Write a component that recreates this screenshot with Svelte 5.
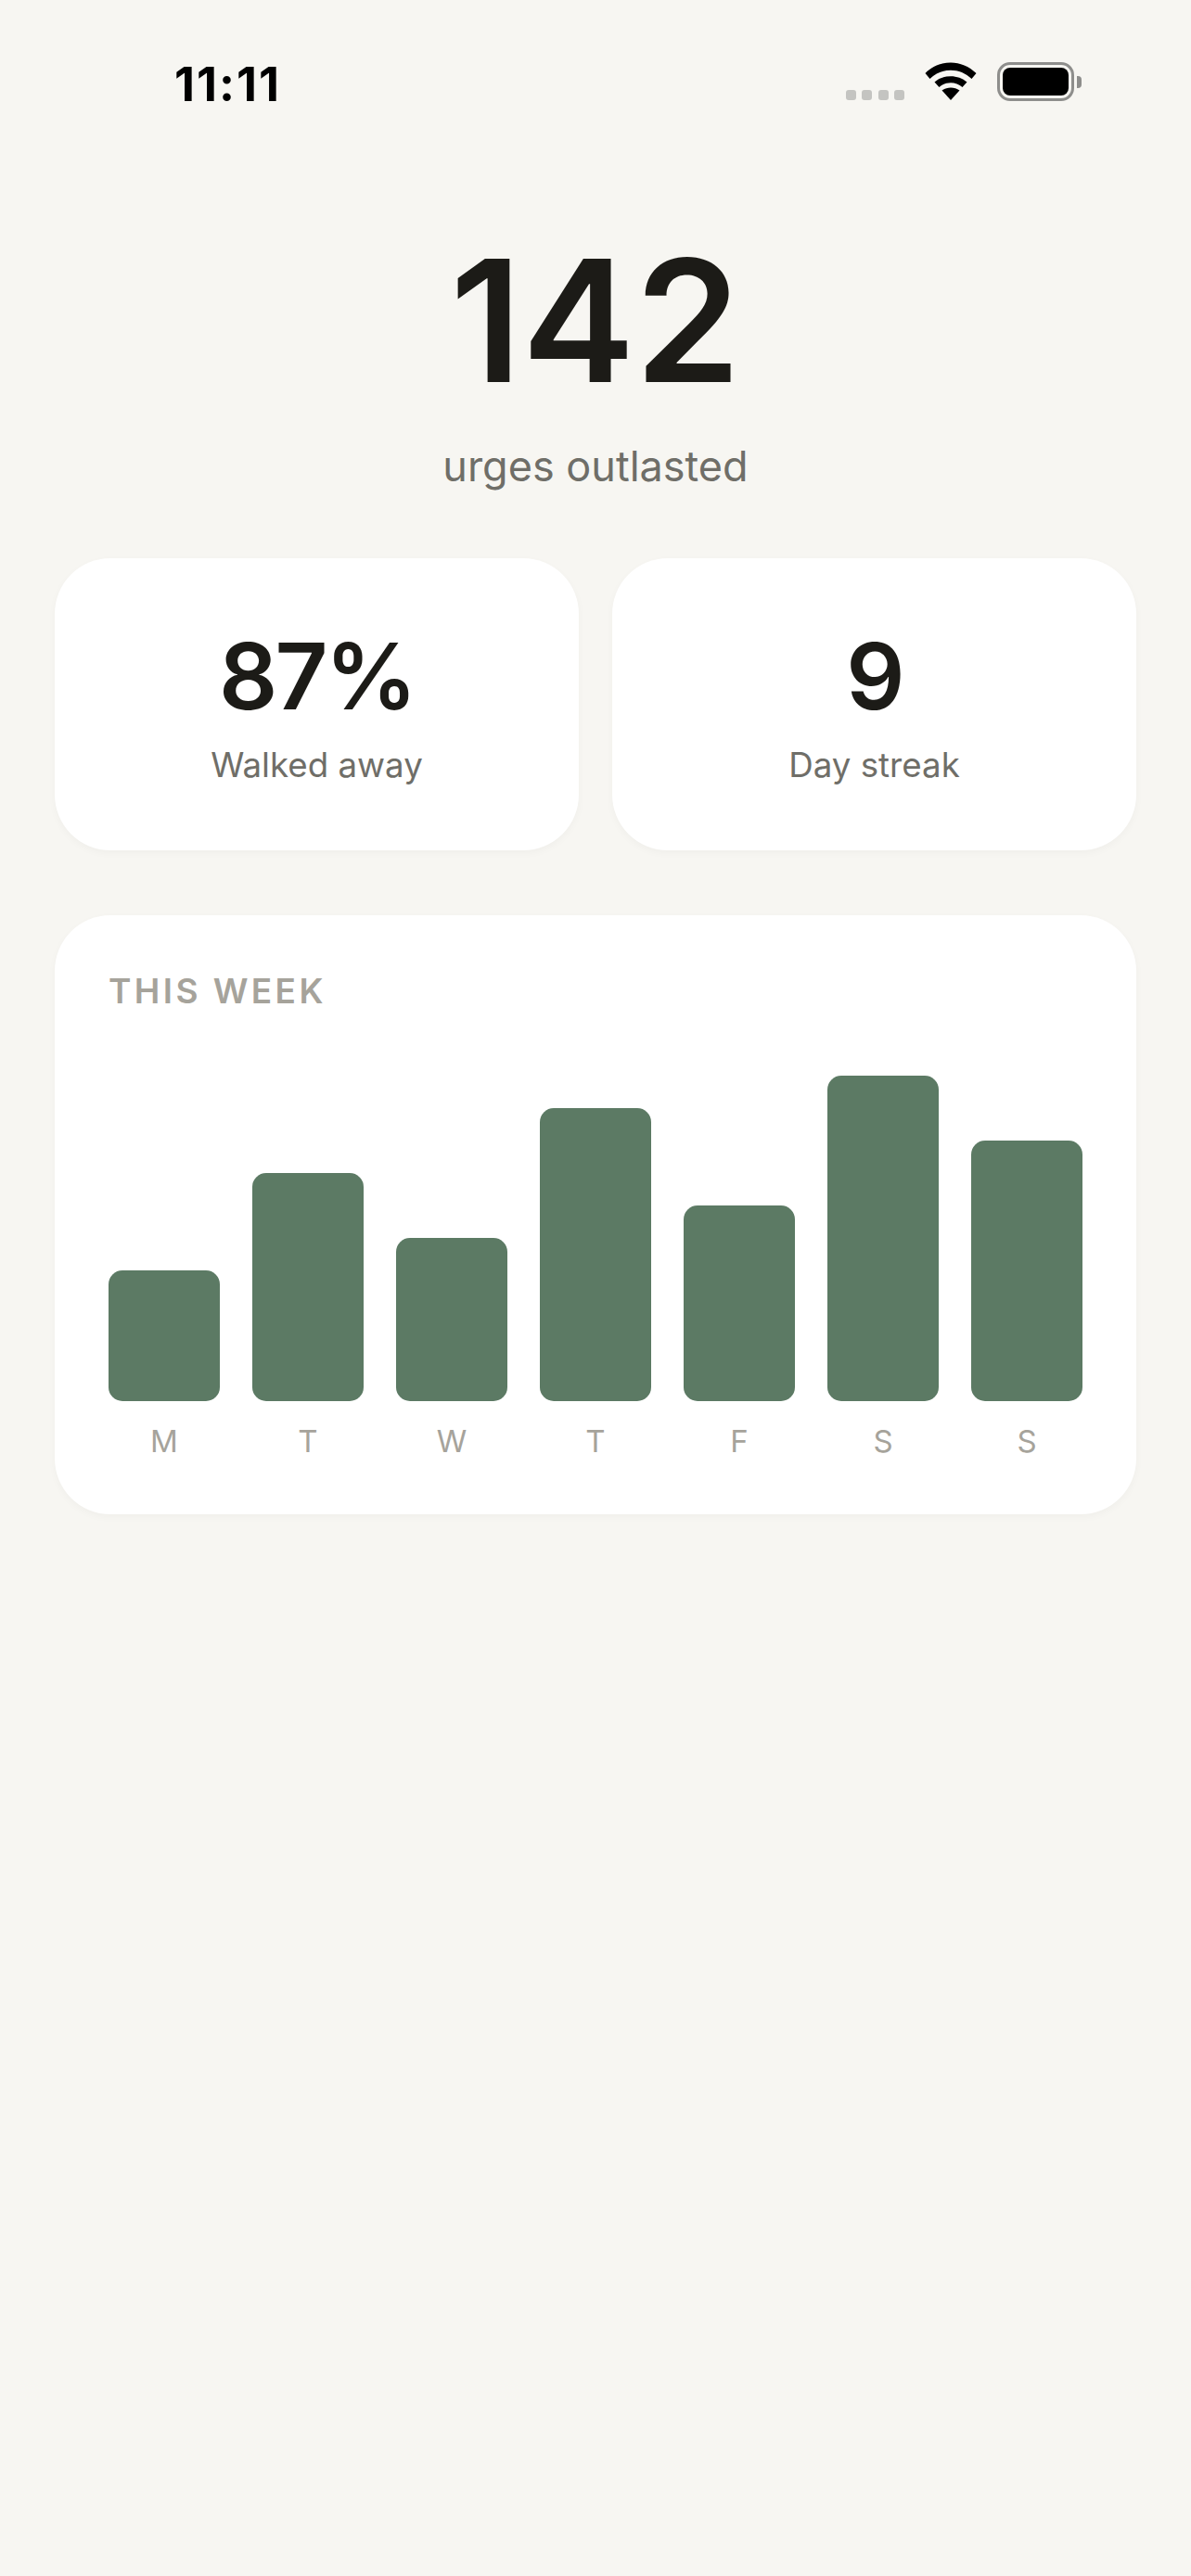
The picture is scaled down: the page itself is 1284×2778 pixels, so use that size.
<script>
  const days = [
    { label: 'M', h: 141 },
    { label: 'T', h: 246 },
    { label: 'W', h: 176 },
    { label: 'T', h: 316 },
    { label: 'F', h: 211 },
    { label: 'S', h: 351 },
    { label: 'S', h: 281 }
  ];
</script>

<div class="screen">
  <header class="status">
    <span class="time">11:11</span>
    <div class="indicators">
      <div class="dots"><i></i><i></i><i></i><i></i></div>
      <svg class="wifi" width="56" height="41" viewBox="0 0 56 41">
        <path d="M28 41 L18.500 30.500 C24 26.500 32 26.500 37.500 30.500 Z" fill="#000"/>
        <path d="M10.500 21.500 C20 13 36 13 45.500 21.500 L40.500 27 C33.500 20.500 22.500 20.500 15.500 27 Z" fill="#000"/>
        <path d="M0.500 12 C16 -3.500 40 -3.500 55.500 12 L50.500 18 C38 5.500 18 5.500 5.500 18 Z" fill="#000"/>
      </svg>
      <div class="battery"><div class="level"></div><div class="cap"></div></div>
    </div>
  </header>

  <section class="hero">
    <div class="count">142</div>
    <div class="caption">urges outlasted</div>
  </section>

  <section class="stats">
    <div class="card stat">
      <div class="value">87%</div>
      <div class="label">Walked away</div>
    </div>
    <div class="card stat">
      <div class="value">9</div>
      <div class="label">Day streak</div>
    </div>
  </section>

  <section class="card week">
    <div class="title">THIS WEEK</div>
    <div class="chart">
      {#each days as d}
        <div class="col">
          <div class="track"><div class="bar" style="height:{d.h}px"></div></div>
          <div class="day">{d.label}</div>
        </div>
      {/each}
    </div>
  </section>
</div>

<style>
  :global(body) {
    margin: 0;
    background: #f7f6f2;
  }
  .screen {
    width: 1284px;
    height: 2778px;
    box-sizing: border-box;
    background: #f7f6f2;
    font-family: Inter, "Liberation Sans", sans-serif;
    padding: 0 59px;
    display: flex;
    flex-direction: column;
    overflow: hidden;
  }
  .status {
    height: 176px;
    margin: 0 -59px;
    display: flex;
    justify-content: space-between;
    align-items: flex-start;
    padding: 61px 126px 0 188px;
    box-sizing: border-box;
  }
  .time {
    font-size: 51px;
    font-weight: 650;
    line-height: 60px;
    color: #000;
    letter-spacing: 2px;
  }
  .indicators {
    display: flex;
    align-items: flex-start;
    gap: 22px;
    padding-top: 6px;
  }
  .dots {
    display: flex;
    gap: 6.5px;
    margin-top: 30px;
  }
  .dots i {
    width: 11px;
    height: 11px;
    border-radius: 3px;
    background: #c4c4c1;
    display: block;
  }
  .wifi {
    display: block;
  }
  .battery {
    position: relative;
    width: 83px;
    height: 42px;
    box-sizing: border-box;
    border: 3.5px solid #8e8e8c;
    border-radius: 14px;
    padding: 3px;
  }
  .level {
    width: 100%;
    height: 100%;
    background: #000;
    border-radius: 8px;
  }
  .cap {
    position: absolute;
    right: -10.500px;
    top: 11.500px;
    width: 5px;
    height: 13px;
    background: #8e8e8c;
    border-radius: 0 4px 4px 0;
  }
  .hero {
    text-align: center;
    display: flex;
    flex-direction: column;
    align-items: center;
  }
  .count {
    font-size: 183px;
    font-weight: 600;
    line-height: 183px;
    letter-spacing: 0;
    color: #1c1b17;
    margin-top: 78px;
  }
  .caption {
    font-size: 45px;
    line-height: 54px;
    color: #6f6e68;
    margin-top: 39px;
  }
  .stats {
    display: grid;
    grid-template-columns: 1fr 1fr;
    gap: 36px;
    margin-top: 72px;
  }
  .card {
    background: #fff;
    border-radius: 60px;
    box-shadow: 0 3px 9px rgba(28, 27, 23, 0.03);
  }
  .stat {
    height: 315px;
    box-sizing: border-box;
    display: flex;
    flex-direction: column;
    align-items: center;
    padding-top: 73px;
  }
  .value {
    font-size: 99px;
    line-height: 108px;
    font-weight: 600;
    letter-spacing: -3px;
    color: #1c1b17;
  }
  .label {
    font-size: 36.700px;
    line-height: 46px;
    color: #6f6e68;
    margin-top: 18.500px;
  }
  .week {
    margin-top: 70px;
    height: 646px;
    box-sizing: border-box;
    padding: 60px 58px 0;
  }
  .title {
    font-size: 37px;
    line-height: 44px;
    font-weight: 600;
    letter-spacing: 3.400px;
    color: #a6a39b;
  }
  .chart {
    display: grid;
    grid-template-columns: repeat(7, 1fr);
    gap: 35px;
    margin-top: 69px;
  }
  .col {
    display: flex;
    flex-direction: column;
    align-items: stretch;
  }
  .track {
    height: 351px;
    display: flex;
    align-items: flex-end;
  }
  .bar {
    width: 100%;
    background: #5c7a64;
    border-radius: 15px;
  }
  .day {
    text-align: center;
    font-size: 33px;
    line-height: 40px;
    color: #a6a39b;
    margin-top: 23px;
  }
</style>
